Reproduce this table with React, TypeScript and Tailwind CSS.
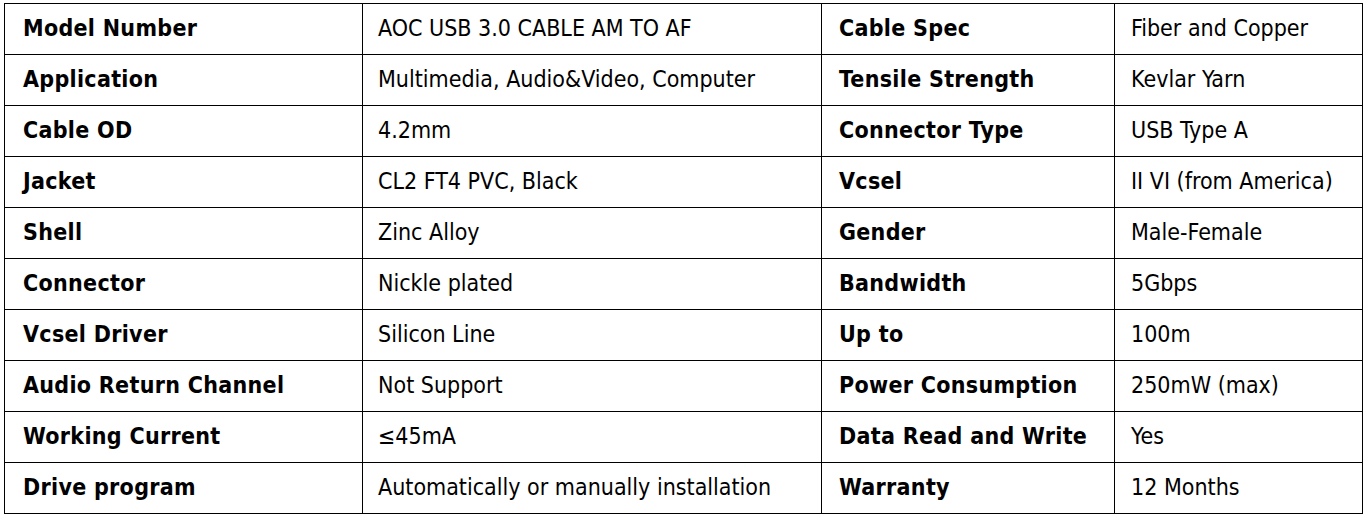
const rows: [string, string, string, string][] = [
  ['Model Number', 'AOC USB 3.0 CABLE AM TO AF', 'Cable Spec', 'Fiber and Copper'],
  ['Application', 'Multimedia, Audio&Video, Computer', 'Tensile Strength', 'Kevlar Yarn'],
  ['Cable OD', '4.2mm', 'Connector Type', 'USB Type A'],
  ['Jacket', 'CL2 FT4 PVC, Black', 'Vcsel', 'II VI (from America)'],
  ['Shell', 'Zinc Alloy', 'Gender', 'Male-Female'],
  ['Connector', 'Nickle plated', 'Bandwidth', '5Gbps'],
  ['Vcsel Driver', 'Silicon Line', 'Up to', '100m'],
  ['Audio Return Channel', 'Not Support', 'Power Consumption', '250mW (max)'],
  ['Working Current', '≤45mA', 'Data Read and Write', 'Yes'],
  ['Drive program', 'Automatically or manually installation', 'Warranty', '12 Months'],
];

export default function App() {
  return (
    <div className="w-[1365px] h-[516px] bg-white pt-[3px] pl-[4px] font-['DejaVu_Sans_Condensed','DejaVu_Sans',sans-serif] text-[23px] leading-none text-black">
      <table className="table-fixed border-collapse w-[1358px]">
        <colgroup>
          <col className="w-[358px]" />
          <col className="w-[459px]" />
          <col className="w-[293px]" />
          <col className="w-[248px]" />
        </colgroup>
        <tbody>
          {rows.map((r) => (
            <tr key={r[0]} className="h-[51px]">
              <td className="border border-black pl-[18px] pb-[1px] font-bold tracking-[0.3px] whitespace-nowrap">{r[0]}</td>
              <td className="border border-black pl-[15px] pb-[1px] whitespace-nowrap">{r[1]}</td>
              <td className="border border-black pl-[17px] pb-[1px] font-bold tracking-[0.3px] whitespace-nowrap">{r[2]}</td>
              <td className="border border-black pl-[16px] pb-[1px] whitespace-nowrap">{r[3]}</td>
            </tr>
          ))}
        </tbody>
      </table>
    </div>
  );
}
